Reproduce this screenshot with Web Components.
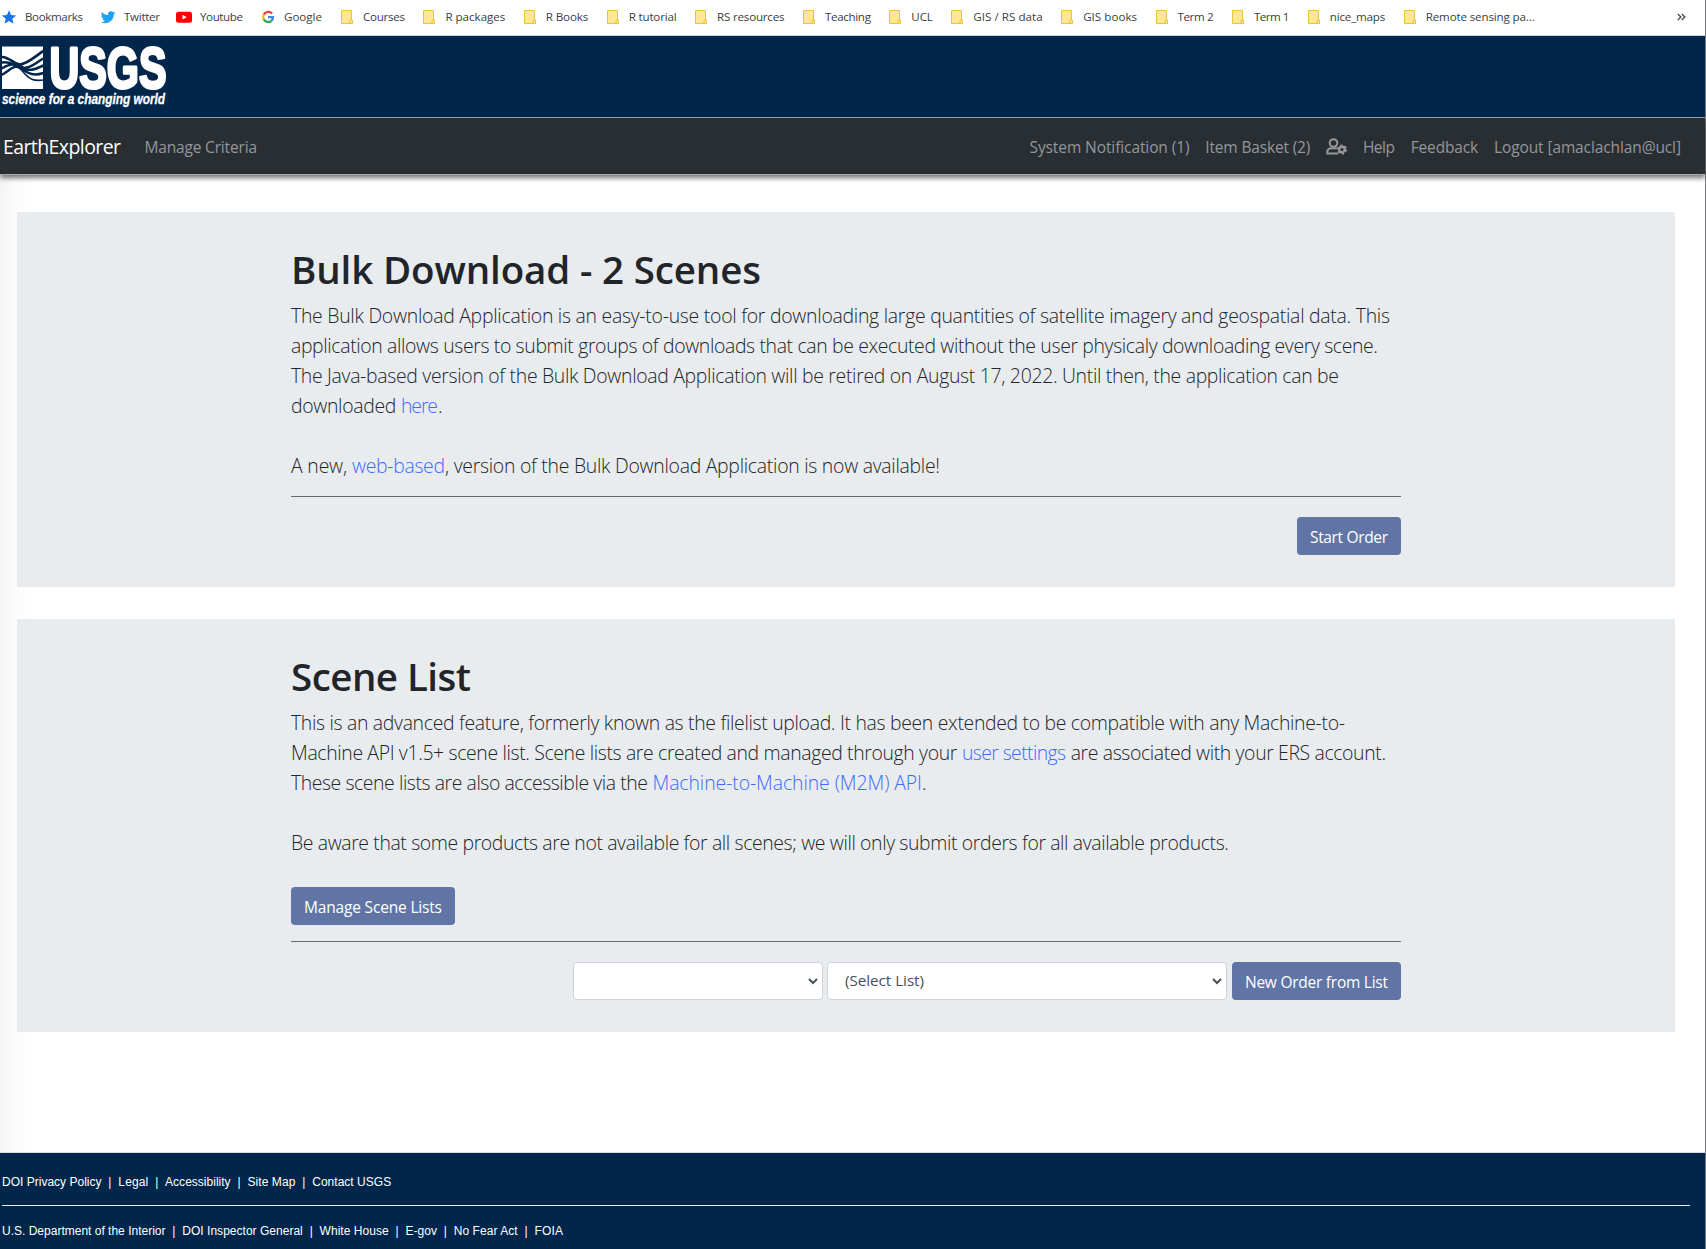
<!DOCTYPE html>
<html lang="en">
<head>
<meta charset="utf-8">
<title>EarthExplorer</title>
<style>
html,body{margin:0;height:100%}
body{background:#fff;overflow:hidden}
</style>
</head>
<body>
<ee-app></ee-app>
<script>
class Base extends HTMLElement {
  constructor() { super(); this.attachShadow({ mode: "open" }); this.shadowRoot.innerHTML = this.view(); }
}

const GLYPHS = {
  star: '<path fill="#1a73e8" d="M8 1.2l2.1 4.7 5.1.5-3.9 3.4 1.2 5L8 12.1l-4.500 2.700 1.200-5L.8 6.400l5.100-.5z"/>',
  twitter: '<path fill="#1da1f2" d="M15.500 3.700c-.5.200-1.100.4-1.700.5.6-.4 1.100-1 1.300-1.600-.6.300-1.200.6-1.900.7A3 3 0 0 0 8 6c-2.500-.1-4.700-1.300-6.200-3.100-.8 1.400-.4 3.200 1 4.100-.5 0-1-.1-1.400-.4 0 1.500 1 2.700 2.400 3-.4.100-.9.100-1.300.1.400 1.200 1.500 2 2.800 2.100A6 6 0 0 1 .9 13c4.900 3 12.800.4 13-7.900.6-.4 1.200-.9 1.600-1.400z"/>',
  youtube: '<rect x="0" y="2.700" width="16" height="11" rx="2.500" fill="#f00"/><path fill="#fff" d="M6.500 5.800v4.800l4.200-2.400z"/>',
  google: '<g fill="none" stroke-width="2.300"><path stroke="#ea4335" d="M12.100 4.600A5 5 0 0 0 3.700 5.800"/><path stroke="#fbbc05" d="M3.700 5.700a5 5 0 0 0 0 4.700"/><path stroke="#34a853" d="M3.700 10.300a5 5 0 0 0 7.700 1.500"/><path stroke="#4285f4" d="M11.300 11.900A5 5 0 0 0 13 8.200H8"/></g>',
};

customElements.define("ee-bookmark", class extends HTMLElement {
  connectedCallback() {
    const kind = this.getAttribute("icon");
    const icon = kind
      ? `<svg width="16" height="16" viewBox="0 0 16 16">${GLYPHS[kind]}</svg>`
      : '<svg width="12" height="16" viewBox="0 0 12 16"><path d="M.5 1.500h10v13H.5z" fill="#ffe793" stroke="#e8c33f"/><path d="M9 11h2.500v3.500H9z" fill="#ffe793" stroke="#e8c33f"/></svg>';
    this.attachShadow({ mode: "open" }).innerHTML = `<style>
      :host{display:flex;align-items:center;gap:${kind ? 8 : 10}px;margin-right:${this.getAttribute("after") || 18.4}px}
      svg{display:block;flex:none}</style>${icon}<slot></slot>`;
  }
});

customElements.define("ee-bookmarks", class extends Base {
  view() {
    const items = [["Bookmarks",58,"star",17],["Twitter",36,"twitter",16],["Youtube",43,"youtube",17],["Google",38,"google",19],
      ["Courses",42],["R packages",60],["R Books",42.500],["R tutorial",48],["RS resources",67.500],["Teaching",46],["UCL",21.500],
      ["GIS / RS data",69.500],["GIS books",54],["Term 2",36],["Term 1",35.500],["nice_maps",55.500],["Remote sensing pa...",109]];
    return `<style>
      :host{display:flex;align-items:center;box-sizing:border-box;height:36px;padding:0 19px 2px 1px;background:#fff;border-bottom:1px solid #d4d6d9;
        font:11.600px "Open Sans",sans-serif;color:#3c4043}
      .more{margin-left:auto;display:block}</style>
      ${items.map(([t, w, i, a]) => `<ee-bookmark ${i ? `icon="${i}"` : ""} ${a ? `after="${a}"` : ""}><fit-text w="${w}">${t}</fit-text></ee-bookmark>`).join("")}
      <svg class="more" width="9" height="8" viewBox="0 0 9 8"><path d="M.8 1l3 3-3 3M4.800 1l3 3-3 3" fill="none" stroke="#50545a" stroke-width="1.500"/></svg>`;
  }
});

customElements.define("usgs-banner", class extends Base {
  view() {
    return `<style>:host{display:block;box-sizing:border-box;height:82px;background:#00264c;border-bottom:1px solid #a3a7ab}svg{display:block;overflow:visible}</style>
    <svg width="220" height="80" viewBox="0 36 220 80">
      <g transform="translate(2 46.500)">
        <path fill="#fff" d="M0 0h41v42.500H0z"/>
        <g fill="none" stroke="#00264c" stroke-width="2.500">
          <path d="M-.3 10.500C7 10 12 18 18 18 26 17 33 10 41.300 4.500" stroke-width="2.700"/>
          <path d="M-.3 16C7 14 13 19 19 21c8 2 14-4 22.300-9"/>
          <path d="M-.3 22C6 18 12 16 18 19c8 7 14 4.500 23.300 0"/>
          <path d="M-.3 28.500C6 25 10 20 15 20c9 4 13 11 26.300 6.500"/>
          <path d="M4 12C12 14 15 19 20 24c7 9 12 11 21.300 9.500" stroke-width="1.600"/>
        </g>
      </g>
      <text x="49.500" y="87.700" font-family="Liberation Sans Narrow,Liberation Sans,sans-serif" font-weight="700" font-size="58" fill="#fff" stroke="#fff" stroke-width="3" stroke-linejoin="round" textLength="117" lengthAdjust="spacingAndGlyphs">USGS</text>
      <text x="2" y="103.500" font-family="Liberation Sans Narrow,Liberation Sans,sans-serif" font-style="italic" font-weight="700" font-size="14" fill="#fff" stroke="#fff" stroke-width=".3" textLength="163" lengthAdjust="spacingAndGlyphs">science for a changing world</text>
    </svg>`;
  }
});

customElements.define("ee-navbar", class extends Base {
  view() {
    return `<style>
      :host{display:flex;align-items:center;box-sizing:border-box;height:57px;padding:1px 24px 0 3px;background:#292e33;border-bottom:1px solid #aaabad;
        box-shadow:0 3px 5px rgba(0,0,0,.55);font:15.500px "Open Sans",sans-serif;color:#94979a;position:relative;z-index:1}
      .brand{font-size:19.500px;color:#fff;margin-right:23.500px}
      .right{display:flex;align-items:center;gap:15.800px;margin-left:auto}
      svg{display:block}</style>
      <fit-text class="brand" w="118">EarthExplorer</fit-text>
      <fit-text w="112.500">Manage Criteria</fit-text>
      <div class="right">
        <fit-text w="160">System Notification (1)</fit-text>
        <fit-text w="105">Item Basket (2)</fit-text>
        <svg width="21" height="17" viewBox="0 0 21 17"><g fill="none" stroke="#94979a" stroke-width="2">
          <circle cx="7.500" cy="5" r="3.800"/><path d="M12 15.500H1.300v-1.300c0-2.700 2-4 4.200-4h3.700c.8 0 1.300.1 1.800.4"/></g>
          <circle cx="16" cy="11.500" r="2.800" fill="none" stroke="#94979a" stroke-width="2.400"/>
          <circle cx="16" cy="11.500" r="4.300" fill="none" stroke="#94979a" stroke-width="1.600" stroke-dasharray="2.250 2.250"/></svg>
        <fit-text w="32">Help</fit-text>
        <fit-text w="67.500">Feedback</fit-text>
        <fit-text w="187">Logout [amaclachlan@ucl]</fit-text>
      </div>`;
  }
});

customElements.define("ee-panel", class extends Base {
  view() {
    return `<style>
      :host{display:block;background:#e9ecef;padding:32px 0;font:300 19.400px/30px "Open Sans",sans-serif;color:#212529}
      .in{width:1110px;margin:0 auto}
      .title{font-weight:600;font-size:38.500px;line-height:51px;height:48px;margin-bottom:8px}
      .body{display:flow-root;padding-top:1px;margin-bottom:-1px}
      .rule{height:1px;background:#65686b;margin:16px 0 20px}
      .foot{display:flex;justify-content:flex-end;align-items:center;gap:5px}
    </style>
    <div class="in"><div class="title"><slot name="title"></slot></div><div class="body"><slot></slot></div><div class="rule"></div><div class="foot"><slot name="actions"></slot></div></div>`;
  }
});

customElements.define("ee-button", class extends Base {
  view() {
    return `<style>:host{display:flex;justify-content:center;align-items:center;box-sizing:border-box;height:38px;padding:1px 13px 0;width:max-content;border-radius:4px;
      background:#6075a6;color:#fff;font:400 15.500px/24px "Open Sans",sans-serif}</style><slot></slot>`;
  }
});

customElements.define("ee-select", class extends Base {
  view() {
    return `<style>:host{display:flex;align-items:center;justify-content:space-between;box-sizing:border-box;height:38px;padding:0 4px 0 17px;border:1px solid #ced4da;border-radius:4px;
      background:#fff;color:#495057;font:400 15.300px/24px "Open Sans",sans-serif}svg{display:block;margin-left:auto}div{padding-bottom:3px}</style>
      <div><slot></slot></div><svg width="10" height="7" viewBox="0 0 10 7"><path d="M1 1l4 4 4-4" fill="none" stroke="#495057" stroke-width="2"/></svg>`;
  }
});

customElements.define("ee-footer", class extends Base {
  view() {
    const row = (items) => items.map(([t, w]) => `<fit-text w="${w}">${t}</fit-text>`).join('<i>|</i>');
    return `<style>
      :host{display:block;box-sizing:border-box;height:97px;padding:0 15px 0 2px;background:#00264c;border-top:1px solid #dcdee0;color:#fff;font:12px/16px "Liberation Sans",sans-serif}
      .row{display:flex;align-items:center}
      .a{padding:21px 0 15px;border-bottom:1px solid #e8ebee}
      .b{padding-top:17px}
      i{font-style:normal;width:16.800px;text-align:center}
    </style>
    <div class="row a">${row([["DOI Privacy Policy",99.500],["Legal",30],["Accessibility",65.500],["Site Map",48],["Contact USGS",79]])}</div>
    <div class="row b">${row([["U.S. Department of the Interior",163.500],["DOI Inspector General",120.500],["White House",69],["E-gov",31.500],["No Fear Act",64],["FOIA",28.500]])}</div>`;
  }
});

customElements.define("ee-app", class extends Base {
  view() {
    return `<style>
      :host{display:flex;flex-direction:column;height:1249px;box-sizing:border-box;border-right:1px solid #77797c}
      main{flex:1;display:flex;flex-direction:column;gap:32px;padding:37px 30px 0 17px;
        background:linear-gradient(90deg,#f4f4f4,#fbfbfb 14px,#fff 30px)}
      .link{color:#3b6bff}
      .gap{height:30px}
      .line{display:flex}
      .up{margin-top:-1px;margin-bottom:1px}
    </style>
    <ee-bookmarks></ee-bookmarks>
    <usgs-banner></usgs-banner>
    <ee-navbar></ee-navbar>
    <main>
      <ee-panel>
        <fit-text slot="title" w="470">Bulk Download - 2 Scenes</fit-text>
        <fit-text w="1099">The Bulk Download Application is an easy-to-use tool for downloading large quantities of satellite imagery and geospatial data. This</fit-text>
        <fit-text w="1087">application allows users to submit groups of downloads that can be executed without the user physicaly downloading every scene.</fit-text>
        <fit-text w="1048">The Java-based version of the Bulk Download Application will be retired on August 17, 2022. Until then, the application can be</fit-text>
        <div class="line"><fit-text w="110">downloaded </fit-text><fit-text class="link" w="37">here</fit-text><fit-text w="4">.</fit-text></div>
        <div class="gap"></div>
        <div class="line"><fit-text w="61">A new, </fit-text><fit-text class="link" w="93">web-based</fit-text><fit-text w="495">, version of the Bulk Download Application is now available!</fit-text></div>
        <ee-button slot="actions"><fit-text w="78">Start Order</fit-text></ee-button>
      </ee-panel>
      <ee-panel>
        <fit-text slot="title" w="180">Scene List</fit-text>
        <fit-text w="1054">This is an advanced feature, formerly known as the filelist upload. It has been extended to be compatible with any Machine-to-</fit-text>
        <div class="line"><fit-text w="671">Machine API v1.5+ scene list. Scene lists are created and managed through your </fit-text><fit-text class="link" w="104">user settings</fit-text><fit-text w="320"> are associated with your ERS account.</fit-text></div>
        <div class="line"><fit-text w="361.500">These scene lists are also accessible via the </fit-text><fit-text class="link" w="269.500">Machine-to-Machine (M2M) API</fit-text><fit-text w="4">.</fit-text></div>
        <div class="gap"></div>
        <fit-text w="938">Be aware that some products are not available for all scenes; we will only submit orders for all available products.</fit-text>
        <div class="gap"></div>
        <ee-button class="up"><fit-text w="138">Manage Scene Lists</fit-text></ee-button>
        <ee-select slot="actions" style="width:250px;margin-right:-1px"></ee-select>
        <ee-select slot="actions" style="width:400px"><fit-text w="79">(Select List)</fit-text></ee-select>
        <ee-button slot="actions"><fit-text w="143">New Order from List</fit-text></ee-button>
      </ee-panel>
    </main>
    <ee-footer></ee-footer>`;
  }
});

// Single line of text tracked so that it fills the width given in its "w" attribute.
customElements.define("fit-text", class extends HTMLElement {
  connectedCallback() {
    if (this.shadowRoot) return;
    const w = parseFloat(this.getAttribute("w"));
    this.attachShadow({ mode: "open" }).innerHTML =
      `<style>:host{display:block;flex:none;white-space:pre;width:${w}px}span{display:inline-block}</style><span><slot></slot></span>`;
    const span = this.shadowRoot.querySelector("span");
    const n = this.textContent.length;
    if (n > 1) span.style.letterSpacing = (w - span.getBoundingClientRect().width) / (n - 1) + "px";
    span.style.verticalAlign = "top";
  }
});
</script>
</body>
</html>
